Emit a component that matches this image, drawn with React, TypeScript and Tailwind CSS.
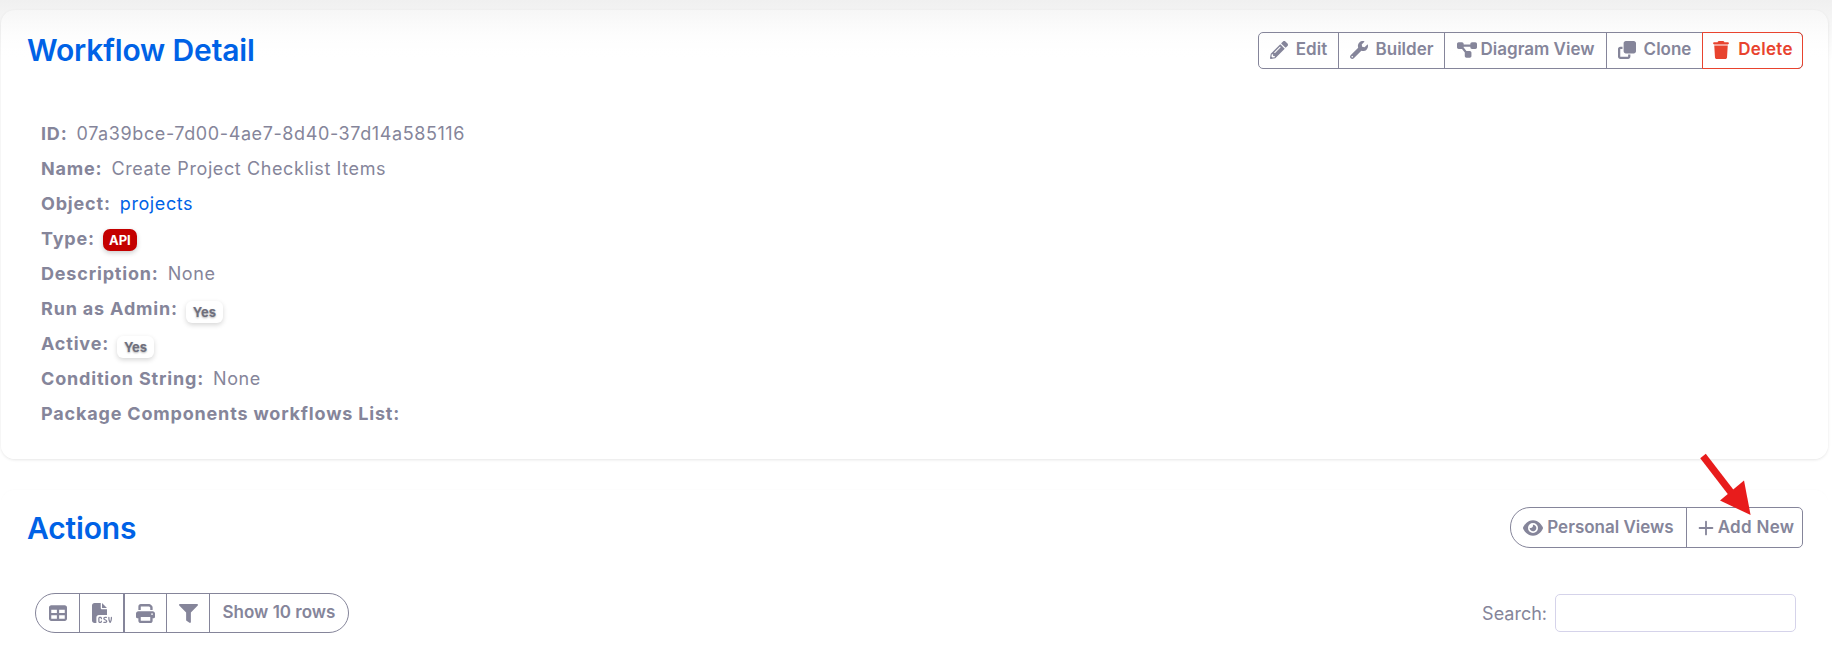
import React from 'react';
import { FaPencilAlt, FaWrench, FaFilter } from 'react-icons/fa';
import { FaDiagramProject, FaClone, FaTrash, FaEye, FaTable, FaFileCsv, FaPrint } from 'react-icons/fa6';
import { Plus } from 'lucide-react';

const YesBadge = () => (
  <span className="-ml-[1px] inline-block rounded-[6px] bg-white px-[7px] text-[13px] leading-[22px] font-bold tracking-normal text-[#6f6f7d] shadow-[0_2px_5px_rgba(0,0,0,0.16)] align-[-2px] [text-shadow:0_1px_2px_rgba(0,0,0,0.3)]">Yes</span>
);

const rows: [string, React.ReactNode][] = [
  ['ID:', '07a39bce-7d00-4ae7-8d40-37d14a585116'],
  ['Name:', 'Create Project Checklist Items'],
  ['Object:', <a className="text-[#0062e6]">projects</a>],
  ['Type:', <span className="-ml-[1px] inline-block rounded-[7px] bg-[#c40000] px-[6px] text-[13px] leading-[22px] font-bold tracking-normal text-white shadow-[0_2px_5px_rgba(0,0,0,0.2)]">API</span>],
  ['Description:', 'None'],
  ['Run as Admin:', <YesBadge />],
  ['Active:', <YesBadge />],
  ['Condition String:', 'None'],
  ['Package Components workflows List:', ''],
];

export default function App() {
  return (
    <div className="relative h-[657px] overflow-hidden bg-[linear-gradient(#f0f0f0,#ffffff_60px)] pt-[10px] pl-[1px] pr-[4px] font-['Inter','Liberation_Sans',sans-serif] text-[#85859a]">
      <div className="h-[449px] rounded-[14px] bg-[linear-gradient(rgba(255,255,255,0.3),#ffffff_50px)] shadow-[0_1px_3px_rgba(0,0,0,0.1)]">
        <div className="flex items-center justify-between pl-[26px] pr-[25px] pt-[21px]">
          <h2 className="text-[30px] leading-[38px] font-semibold tracking-[-0.15px] text-[#0062e6]">Workflow Detail</h2>
          <div className="flex h-[37px] items-stretch rounded-[5px] border border-[#85859a] text-[17px] font-semibold">
            <button className="flex w-[79px] items-center justify-center gap-[8px]"><FaPencilAlt className="text-[18px]" />Edit</button>
            <button className="flex w-[106px] items-center justify-center gap-[8px] border-l border-[#85859a]"><FaWrench className="text-[18px]" />Builder</button>
            <button className="flex w-[162px] items-center justify-center gap-[4px] border-l border-[#85859a]"><FaDiagramProject className="text-[20px]" />Diagram View</button>
            <button className="flex w-[96px] items-center justify-center gap-[8px] border-l border-[#85859a]"><FaClone className="text-[18px]" />Clone</button>
            <button className="-my-px -mr-px flex w-[101px] items-center justify-center gap-[8px] rounded-r-[5px] border border-[#e8432e] tracking-[0.3px] text-[#e8432e]"><FaTrash className="text-[18px]" />Delete</button>
          </div>
        </div>
        <div className="pl-[40px] pt-[47px] text-[18px] leading-[35px] tracking-[0.6px]">
          {rows.map(([k, v]) => (
            <div key={k} className="h-[35px]"><span className="mr-[9px] font-bold tracking-[0.82px]">{k}</span>{v}</div>
          ))}
        </div>
      </div>

      <div className="mt-[31px] h-[300px] rounded-[14px] bg-white shadow-[0_-1px_2px_rgba(0,0,0,0.01)]">
        <div className="flex items-center justify-between pl-[26px] pr-[25px] pt-[17px]">
          <h2 className="text-[30px] leading-[38px] font-semibold tracking-[-0.15px] text-[#0062e6]">Actions</h2>
          <div className="flex h-[41px] items-stretch rounded-l-[20px] rounded-r-[5px] border border-[#85859a] text-[17px] font-semibold">
            <button className="flex w-[175px] items-center justify-center gap-[4px]"><FaEye className="text-[20px]" />Personal Views</button>
            <button className="flex w-[116px] items-center justify-center gap-[1px] border-l border-[#85859a] tracking-[0.3px]"><Plus size={22} />Add New</button>
          </div>
        </div>
        <div className="mt-[45px] flex items-center justify-between pl-[34px] pr-[32px]">
          <div className="flex h-[40px] items-stretch rounded-[20px] border border-[#85859a] text-[17px] font-semibold">
            <button className="flex w-[43px] items-center justify-center"><FaTable className="text-[18px]" /></button>
            <button className="flex w-[44px] items-center justify-center border-l border-[#85859a]"><FaFileCsv className="text-[20px]" /></button>
            <button className="flex w-[43px] items-center justify-center border-l-2 border-[#85859a]"><FaPrint className="text-[19px]" /></button>
            <button className="flex w-[43px] items-center justify-center border-l border-[#85859a]"><FaFilter className="text-[19px]" /></button>
            <button className="w-[139px] border-l border-[#85859a]">Show 10 rows</button>
          </div>
          <label className="flex items-center gap-[8px] text-[18px]">
            Search:
            <input className="h-[38px] w-[241px] rounded-[5px] border border-[#d5d3ea] bg-white" />
          </label>
        </div>
      </div>

      <svg className="absolute left-[1695px] top-[450px]" width="70" height="74" viewBox="0 0 70 74">
        <path d="M8 6 L38 45" stroke="#e81c1c" strokeWidth="7" fill="none" />
        <path d="M25 50.6 L49 30.6 L55.6 65 Z" fill="#e81c1c" />
      </svg>
    </div>
  );
}
